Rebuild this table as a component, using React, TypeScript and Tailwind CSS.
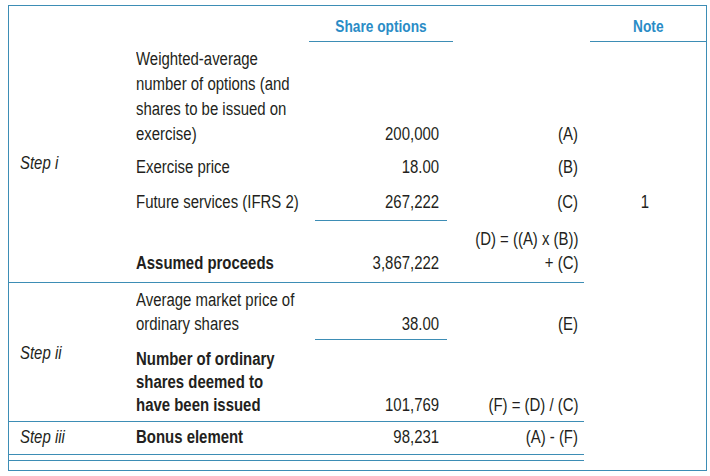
import React from "react";

type O = "l" | "r" | "c";

function S({
  children,
  o = "l",
  className = "",
}: {
  children: React.ReactNode;
  o?: O;
  className?: string;
}) {
  const origin =
    o === "l" ? "origin-left" : o === "r" ? "origin-right" : "origin-center";
  return (
    <span
      className={`block w-max whitespace-nowrap scale-x-[0.83] ${origin} ${className}`}
    >
      {children}
    </span>
  );
}

const LC = "border-[#3d8db5]";
const C1 = "w-[127px] shrink-0 pl-[11px] italic flex";
const C2 = "w-[173px] shrink-0 flex";
const C3 = "w-[144px] shrink-0 pr-[14px] flex justify-end";
const C4 = "w-[131px] shrink-0 pr-[6px] flex justify-end";
const C5 = "w-[122px] shrink-0 flex justify-center";

export default function App() {
  return (
    <div className="w-[710px] h-[476px] bg-white pt-[5px] pl-[8px] text-[18px] text-[#231f20] font-['Liberation_Sans',Arial,sans-serif]">
      <div className={`w-[699px] border ${LC}`}>
        {/* header */}
        <div className="flex h-[36px]">
          <div className="w-[300px] shrink-0" />
          <div
            className={`w-[144px] shrink-0 border-b ${LC} flex justify-center font-bold text-[16.5px] text-[#2a8cc6] pt-[8px] leading-[25px]`}
          >
            <S o="c">Share options</S>
          </div>
          <div className="w-[131px] shrink-0" />
          <div className="w-[122px] shrink-0 pl-[6px]">
            <div
              className={`h-full border-b ${LC} flex justify-center font-bold text-[16.5px] text-[#2a8cc6] pt-[8px] leading-[25px]`}
            >
              <S o="c">Note</S>
            </div>
          </div>
        </div>

        {/* row 1 */}
        <div className="flex items-end pt-[5px] leading-[25px]">
          <div className={C1} />
          <div className={C2}>
            <S>
              Weighted-average
              <br />
              number of options (and
              <br />
              shares to be issued on
              <br />
              exercise)
            </S>
          </div>
          <div className={C3}>
            <S o="r">200,000</S>
          </div>
          <div className={C4}>
            <S o="r">(A)</S>
          </div>
          <div className={C5} />
        </div>

        {/* row 2 */}
        <div className="flex items-start leading-[25px]">
          <div className={C1 + " pt-[4px]"}>
            <S>Step i</S>
          </div>
          <div className={C2 + " pt-[8px]"}>
            <S>Exercise price</S>
          </div>
          <div className={C3 + " pt-[8px]"}>
            <S o="r">18.00</S>
          </div>
          <div className={C4 + " pt-[8px]"}>
            <S o="r">(B)</S>
          </div>
          <div className={C5} />
        </div>

        {/* row 3 */}
        <div className="flex items-start leading-[25px]">
          <div className={C1} />
          <div className={C2 + " pt-[10px]"}>
            <S>Future services (IFRS 2)</S>
          </div>
          <div className="w-[144px] shrink-0 px-[6px]">
            <div
              className={`border-b ${LC} flex justify-end pr-[8px] pt-[10px] pb-[5px]`}
            >
              <S o="r">267,222</S>
            </div>
          </div>
          <div className={C4 + " pt-[10px]"}>
            <S o="r">(C)</S>
          </div>
          <div className={C5 + " pt-[10px]"}>
            <S o="c">1</S>
          </div>
        </div>

        {/* row 4 */}
        <div className="flex">
          <div
            className={`flex w-[575px] shrink-0 items-end pt-[6px] pb-[7px] border-b ${LC} leading-[24px]`}
          >
            <div className={C1} />
            <div className={C2 + " font-bold"}>
              <S>Assumed proceeds</S>
            </div>
            <div className={C3}>
              <S o="r">3,867,222</S>
            </div>
            <div className={C4}>
              <S o="r" className="text-right">
                (D) = ((A) x (B))
                <br />+ (C)
              </S>
            </div>
          </div>
          <div className={C5} />
        </div>

        {/* row 5 */}
        <div className="flex">
          <div className="flex w-[575px] shrink-0 items-end pt-[5px] leading-[24px]">
            <div className={C1 + " pb-[4px]"} />
            <div className={C2 + " pb-[4px]"}>
              <S>
                Average market price of
                <br />
                ordinary shares
              </S>
            </div>
            <div className="w-[144px] shrink-0 px-[6px]">
              <div className={`border-b ${LC} flex justify-end pr-[8px] pb-[3px]`}>
                <S o="r">38.00</S>
              </div>
            </div>
            <div className={C4 + " pb-[4px]"}>
              <S o="r">(E)</S>
            </div>
          </div>
          <div className={C5} />
        </div>

        {/* row 6 */}
        <div className="flex">
          <div
            className={`flex w-[575px] shrink-0 items-end pb-[4px] border-b ${LC} leading-[23px]`}
          >
            <div className={C1 + " self-start pt-[2px]"}>
              <S>Step ii</S>
            </div>
            <div className={C2 + " font-bold pt-[8px]"}>
              <S>
                Number of ordinary
                <br />
                shares deemed to
                <br />
                have been issued
              </S>
            </div>
            <div className={C3}>
              <S o="r">101,769</S>
            </div>
            <div className={C4}>
              <S o="r">(F) = (D) / (C)</S>
            </div>
          </div>
          <div className={C5} />
        </div>

        {/* row 7 */}
        <div className="flex">
          <div
            className={`flex w-[575px] shrink-0 items-end pt-[3px] pb-[5px] border-b ${LC} leading-[24px]`}
          >
            <div className={C1}>
              <S>Step iii</S>
            </div>
            <div className={C2 + " font-bold"}>
              <S>Bonus element</S>
            </div>
            <div className={C3}>
              <S o="r">98,231</S>
            </div>
            <div className={C4}>
              <S o="r">(A) - (F)</S>
            </div>
          </div>
          <div className={C5} />
        </div>

        {/* double line */}
        <div className="flex">
          <div className={`w-[575px] shrink-0 h-[6px] border-b ${LC}`} />
        </div>
        <div className="h-[9px]" />
      </div>
    </div>
  );
}
